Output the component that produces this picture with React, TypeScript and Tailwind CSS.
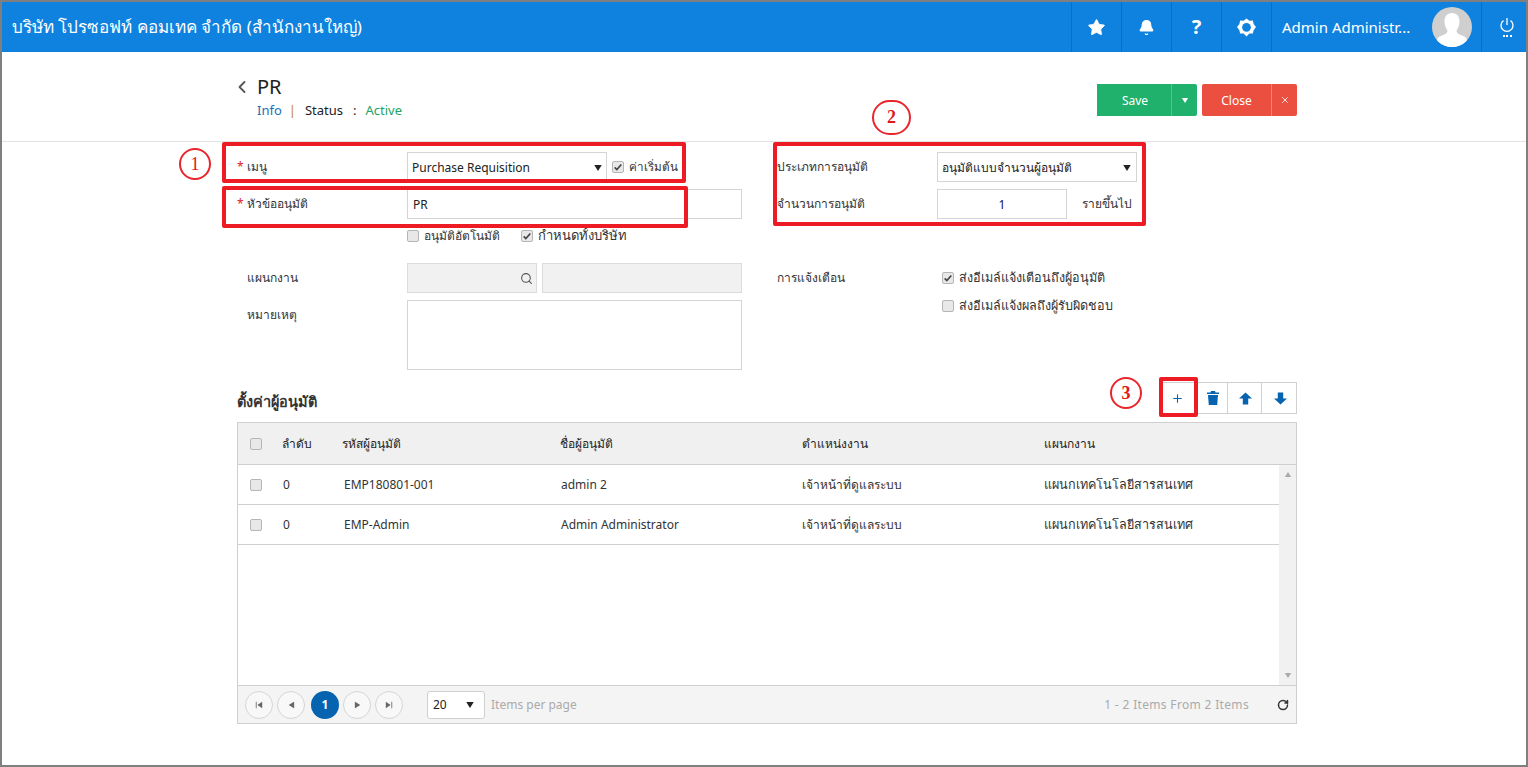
import { Star, Bell, Search, ChevronLeft, X, Plus, RotateCw } from 'lucide-react'

const rows = [
  { code: 'EMP180801-001', name: 'admin 2' },
  { code: 'EMP-Admin', name: 'Admin Administrator' },
]

function Caret({ className = 'w-[8px] h-[6px] text-[#222]' }: { className?: string }) {
  return (
    <svg viewBox="0 0 10 8" className={className}>
      <path d="M0 0h10L5 8z" fill="currentColor" />
    </svg>
  )
}

function Check({ checked = false }: { checked?: boolean }) {
  return (
    <span className="flex items-center justify-center w-[12px] h-[12px] shrink-0 rounded-[2px] border border-[#b5b5b5] bg-[#e8e8e8]">
      {checked && (
        <svg viewBox="0 0 12 12" className="w-[10px] h-[10px]">
          <path d="M2 6.5l2.600 2.600L10 3" fill="none" stroke="#444" strokeWidth="2" />
        </svg>
      )}
    </span>
  )
}

function CheckLabel({ text, checked, className = 'text-[12px]' }: { text: string; checked?: boolean; className?: string }) {
  return (
    <span className={`flex items-center gap-[5px] text-[#333] ${className}`}>
      <Check checked={checked} />
      {text}
    </span>
  )
}

function HeaderIcon({ children }: { children: React.ReactNode }) {
  return <div className="w-[50px] h-full flex items-center justify-center border-l border-[#0b6fc0]">{children}</div>
}

function PageButton({ children, active }: { children: React.ReactNode; active?: boolean }) {
  return (
    <span
      className={
        active
          ? 'flex items-center justify-center w-[28px] h-[28px] rounded-full bg-[#0563b0] text-white text-[12px] font-bold'
          : 'flex items-center justify-center w-[28px] h-[28px] rounded-full border border-[#d5d5d5] bg-[#f8f8f8] text-[#666]'
      }
    >
      {children}
    </span>
  )
}

export default function App() {
  return (
    <div className="relative h-[767px] flex flex-col border-2 border-[#7f7f7f] bg-white overflow-hidden font-['Noto_Sans','Liberation_Sans',sans-serif] text-[12px] text-[#333]">
      {/* header */}
      <div className="h-[50px] shrink-0 flex items-center bg-[#0f82df] text-white">
        <div className="flex-1 pl-[10px] text-[17px]">บริษัท โปรซอฟท์ คอมเทค จำกัด (สำนักงานใหญ่)</div>
        <HeaderIcon><Star size={19} fill="white" strokeWidth={1} /></HeaderIcon>
        <HeaderIcon><Bell size={17} fill="white" strokeWidth={1.5} /></HeaderIcon>
        <HeaderIcon><span className="text-[20px] font-bold">?</span></HeaderIcon>
        <HeaderIcon>
          <svg viewBox="0 0 20 20" className="w-[19px] h-[19px]">
            <path d="M10 0.5l3 2.300 3.700-.2.8 3.600 2.500 3.300-2.500 3.300-.8 3.600-3.700-.2-3 3.300-3-3.300-3.700.2-.8-3.600L0 9.500l2.500-3.300.8-3.600 3.700.2z" fill="white" />
            <circle cx="10" cy="9.8" r="4.6" fill="#0f82df" />
          </svg>
        </HeaderIcon>
        <div className="w-[210px] h-full flex items-center justify-between pl-[10px] pr-[9px] border-l border-[#0b6fc0]">
          <span className="text-[15px]">Admin Administr...</span>
          <span className="w-[40px] h-[40px] rounded-full bg-[#cfcfcf] overflow-hidden">
            <svg viewBox="0 0 40 40" className="w-full h-full">
              <path d="M20 6c5 0 7.500 3.500 7.500 8.500 0 4-1.500 7-3 9 0 2.500 1.500 3.500 4.500 4.500 3.500 1.200 5.500 2.500 6 5l-1 7H6l-1-7c.5-2.500 2.500-3.800 6-5 3-1 4.500-2 4.500-4.500-1.500-2-3-5-3-9C12.500 9.500 15 6 20 6z" fill="white" />
            </svg>
          </span>
        </div>
        <div className="w-[45px] h-full flex flex-col items-center justify-center pl-[6px] border-l border-[#0b6fc0]">
          <svg viewBox="0 0 16 16" className="w-[16px] h-[16px]" fill="none" stroke="white" strokeWidth="1.3">
            <path d="M8 1v7" />
            <path d="M4.500 3.500a6 6 0 1 0 7 0" />
          </svg>
          <span className="w-[9px] h-[2px] mt-[2px] border-t-2 border-dotted border-white" />
        </div>
      </div>

      {/* title bar */}
      <div className="h-[90px] shrink-0 border-b border-[#e2e2e2] pl-[235px] pr-[229px] flex justify-between">
        <div className="flex pt-[22px]">
          <ChevronLeft size={20} strokeWidth={2.2} className="mt-[3px] -ml-[5px] mr-[5px] text-[#555]" />
          <div>
            <div className="text-[20px] leading-[26px] text-[#222]">PR</div>
            <div className="mt-[1px] text-[13px] leading-[18px] flex">
              <span className="text-[#1d6fb8]">Info</span>
              <span className="text-[#c77f10] ml-[7px]">|</span>
              <span className="text-[#222] ml-[9px]">Status</span>
              <span className="text-[#222] ml-[10px]">:</span>
              <span className="text-[#21a366] ml-[9px]">Active</span>
            </div>
          </div>
        </div>
        <div className="flex pt-[32px] gap-[5px] text-white">
          <div className="flex h-[32px]">
            <span className="w-[75px] pl-[2px] pt-[1px] flex items-center justify-center bg-[#20b26c] border-r border-[#4cc88c]">Save</span>
            <span className="w-[25px] flex items-center justify-center bg-[#20b26c] rounded-r-[2px]"><Caret className="w-[8px] h-[5px] text-white" /></span>
          </div>
          <div className="flex h-[32px]">
            <span className="w-[70px] pt-[1px] flex items-center justify-center bg-[#eb4f3f] border-r border-[#f58275] rounded-l-[2px]">Close</span>
            <span className="w-[25px] flex items-center justify-center bg-[#eb4f3f] rounded-r-[2px]"><X size={10} /></span>
          </div>
        </div>
      </div>

      <div className="pl-[235px] pr-[229px] pt-[10px]">
        {/* form */}
        <div className="flex flex-col gap-[7px]">
          <div className="flex h-[30px] items-center">
            <Label text="เมนู" required />
            <div className="w-[335px] flex items-center gap-[5px]">
              <div className="w-[200px] h-[30px] flex items-center justify-between pl-[4px] pr-[4px] pt-[1px] border border-[#d5d5d5] text-[#222]">
                <span>Purchase Requisition</span>
                <Caret />
              </div>
              <CheckLabel text="ค่าเริ่มต้น" checked className="text-[11.7px]" />
            </div>
            <div className="w-[35px]" />
            <div className="w-[160px]">ประเภทการอนุมัติ</div>
            <div className="w-[200px] h-[30px] flex items-center justify-between pl-[4px] pr-[5px] pt-[1px] border border-[#d5d5d5] text-[#222]">
              <span>อนุมัติแบบจำนวนผู้อนุมัติ</span>
              <Caret />
            </div>
          </div>
          <div className="flex h-[30px] items-center">
            <Label text="หัวข้ออนุมัติ" required />
            <input readOnly value="PR" className="w-[335px] h-[30px] px-[5px] border border-[#d5d5d5] text-[#222] outline-none" />
            <div className="w-[35px]" />
            <div className="w-[160px]">จำนวนการอนุมัติ</div>
            <input readOnly value="1" className="w-[130px] h-[30px] text-center border border-[#d5d5d5] text-[#14145a] outline-none" />
            <span className="ml-[15px]">รายขึ้นไป</span>
          </div>
          <div className="flex h-[20px] items-center pl-[170px] gap-[21px]">
            <CheckLabel text="อนุมัติอัตโนมัติ" />
            <CheckLabel text="กำหนดทั้งบริษัท" checked className="text-[13px]" />
          </div>
          <div className="flex h-[30px] items-center mt-[10px]">
            <Label text="แผนกงาน" />
            <div className="w-[335px] flex gap-[5px]">
              <div className="w-[130px] h-[30px] flex items-center justify-end pr-[3px] bg-[#f1f1f1] border border-[#dcdcdc]">
                <Search size={13} className="text-[#555]" />
              </div>
              <div className="w-[200px] h-[30px] bg-[#f1f1f1] border border-[#dcdcdc]" />
            </div>
            <div className="w-[35px]" />
            <div className="w-[165px]">การแจ้งเตือน</div>
            <CheckLabel text="ส่งอีเมล์แจ้งเตือนถึงผู้อนุมัติ" checked className="text-[12.6px]" />
          </div>
          <div className="flex h-[70px] items-start">
            <div className="w-[170px] pl-[10px] pt-[6px]">หมายเหตุ</div>
            <div className="w-[335px] h-[70px] border border-[#d5d5d5]" />
            <div className="w-[200px]" />
            <div className="-mt-[3px]"><CheckLabel text="ส่งอีเมล์แจ้งผลถึงผู้รับผิดชอบ" className="text-[12.6px]" /></div>
          </div>
        </div>

        {/* approver toolbar */}
        <div className="mt-[12px] flex items-end justify-between">
          <div className="text-[14.5px] font-semibold text-[#333] pb-[1px]">ตั้งค่าผู้อนุมัติ</div>
          <div className="flex h-[32px] border border-[#d0d0d0] text-[#0563b0]">
            <span className="w-[38px] pr-[2px] flex items-center justify-center border-r border-[#d0d0d0]"><Plus size={13} /></span>
            <span className="w-[30px] flex items-center justify-center border-r border-[#d0d0d0]">
              <svg viewBox="0 0 12 14" className="w-[12px] h-[14px]">
                <path d="M4 0h4l.5 1.500H12V3H0V1.500h3.500zM1 4h10l-.8 10H1.800z" fill="currentColor" />
              </svg>
            </span>
            <span className="w-[34px] pl-[1px] flex items-center justify-center border-r border-[#d0d0d0]">
              <svg viewBox="0 0 12 12" className="w-[13px] h-[13px]"><path d="M6 .5L12 6H8.500v5.500h-5V6H0z" fill="currentColor" /></svg>
            </span>
            <span className="w-[34px] pl-[2px] flex items-center justify-center">
              <svg viewBox="0 0 12 12" className="w-[13px] h-[13px]"><path d="M6 11.500L12 6H8.500V.5h-5V6H0z" fill="currentColor" /></svg>
            </span>
          </div>
        </div>

        {/* approver table */}
        <div className="mt-[8px] border border-[#cfcfcf] flex flex-col h-[302px]">
          <div className="h-[42px] shrink-0 flex items-center bg-[#f0f0f0] border-b border-[#cfcfcf] font-medium text-[#222]">
            <span className="w-[44px] pl-[12px]"><Check /></span>
            <span className="w-[60px]">ลำดับ</span>
            <span className="w-[218px]">รหัสผู้อนุมัติ</span>
            <span className="w-[242px]">ชื่อผู้อนุมัติ</span>
            <span className="w-[242px]">ตำแหน่งงาน</span>
            <span>แผนกงาน</span>
          </div>
          <div className="flex flex-1 min-h-0">
            <div className="flex-1">
              {rows.map((r) => (
                <div key={r.code} className="h-[40px] flex items-center border-b border-[#cfcfcf] text-[#333]">
                  <span className="w-[44px] pl-[12px]"><Check /></span>
                  <span className="w-[61px] pl-[1px]">0</span>
                  <span className="w-[217px] pl-[1px]">{r.code}</span>
                  <span className="w-[242px] pl-[1px]">{r.name}</span>
                  <span className="w-[242px]">เจ้าหน้าที่ดูแลระบบ</span>
                  <span className="pt-[1px] text-[12.6px]">แผนกเทคโนโลยีสารสนเทศ</span>
                </div>
              ))}
            </div>
            <div className="w-[17px] flex flex-col items-center justify-between py-[7px] bg-[#f1f1f1]">
              <Caret className="w-[8px] h-[5px] rotate-180 text-[#aaa]" />
              <Caret className="w-[8px] h-[5px] text-[#aaa]" />
            </div>
          </div>
          <div className="h-[38px] shrink-0 flex items-center bg-[#f4f4f4] border-t border-[#cfcfcf] pl-[7px] pr-[7px]">
            <div className="flex gap-[4px]">
              <PageButton>
                <svg viewBox="0 0 10 10" className="w-[8px] h-[8px]"><path d="M1 1h1v8H1zM9 1v8L3 5z" fill="currentColor" /></svg>
              </PageButton>
              <PageButton><Caret className="w-[7px] h-[6px] rotate-90" /></PageButton>
              <span className="w-[2px] -ml-[4px]" />
              <PageButton active>1</PageButton>
              <PageButton><Caret className="w-[7px] h-[6px] -rotate-90" /></PageButton>
              <PageButton>
                <svg viewBox="0 0 10 10" className="w-[8px] h-[8px]"><path d="M9 1H8v8h1zM1 1v8l6-4z" fill="currentColor" /></svg>
              </PageButton>
            </div>
            <div className="ml-[24px] w-[58px] h-[28px] flex items-center justify-between px-[5px] pr-[10px] bg-white border border-[#d0d0d0] rounded-[3px] text-[#222]">
              <span>20</span>
              <Caret />
            </div>
            <span className="ml-[6px] text-[#aaa]">Items per page</span>
            <span className="ml-auto tracking-[0.33px] text-[#aaa]">1 - 2 Items From 2 Items</span>
            <RotateCw size={12} strokeWidth={3} className="ml-[28px] text-[#333]" />
          </div>
        </div>
      </div>

      {/* red callouts drawn over the form */}
      <div className="absolute left-[220px] top-[140px] w-[464px] h-[41px] border-4 border-[#ed1c24] rounded-[2px]" />
      <div className="absolute left-[220px] top-[184px] w-[466px] h-[42px] border-4 border-[#ed1c24] rounded-[2px]" />
      <div className="absolute left-[771px] top-[140px] w-[373px] h-[84px] border-4 border-[#ed1c24] rounded-[2px]" />
      <div className="absolute left-[1157px] top-[375px] w-[39px] h-[40px] border-4 border-[#ed1c24] rounded-[2px]" />
      <Callout className="left-[177px] top-[146px] w-[32px] h-[32px]" text="1" />
      <Callout className="left-[870px] top-[98px] w-[39px] h-[35px] font-bold" text="2" />
      <Callout className="left-[1108px] top-[375px] w-[32px] h-[32px] font-bold" text="3" />
    </div>
  )
}

function Label({ text, required }: { text: string; required?: boolean }) {
  return (
    <div className="w-[170px] flex gap-[4px]">
      <span className={required ? 'w-[6px] text-[#e02020]' : 'w-[6px]'}>{required ? '*' : ''}</span>
      <span>{text}</span>
    </div>
  )
}

function Callout({ className, text }: { className: string; text: string }) {
  return (
    <div className={`absolute flex items-center justify-center rounded-full border-2 border-[#e8262c] bg-white text-[#e01818] text-[18px] font-['Liberation_Serif',serif] ${className}`}>
      {text}
    </div>
  )
}
